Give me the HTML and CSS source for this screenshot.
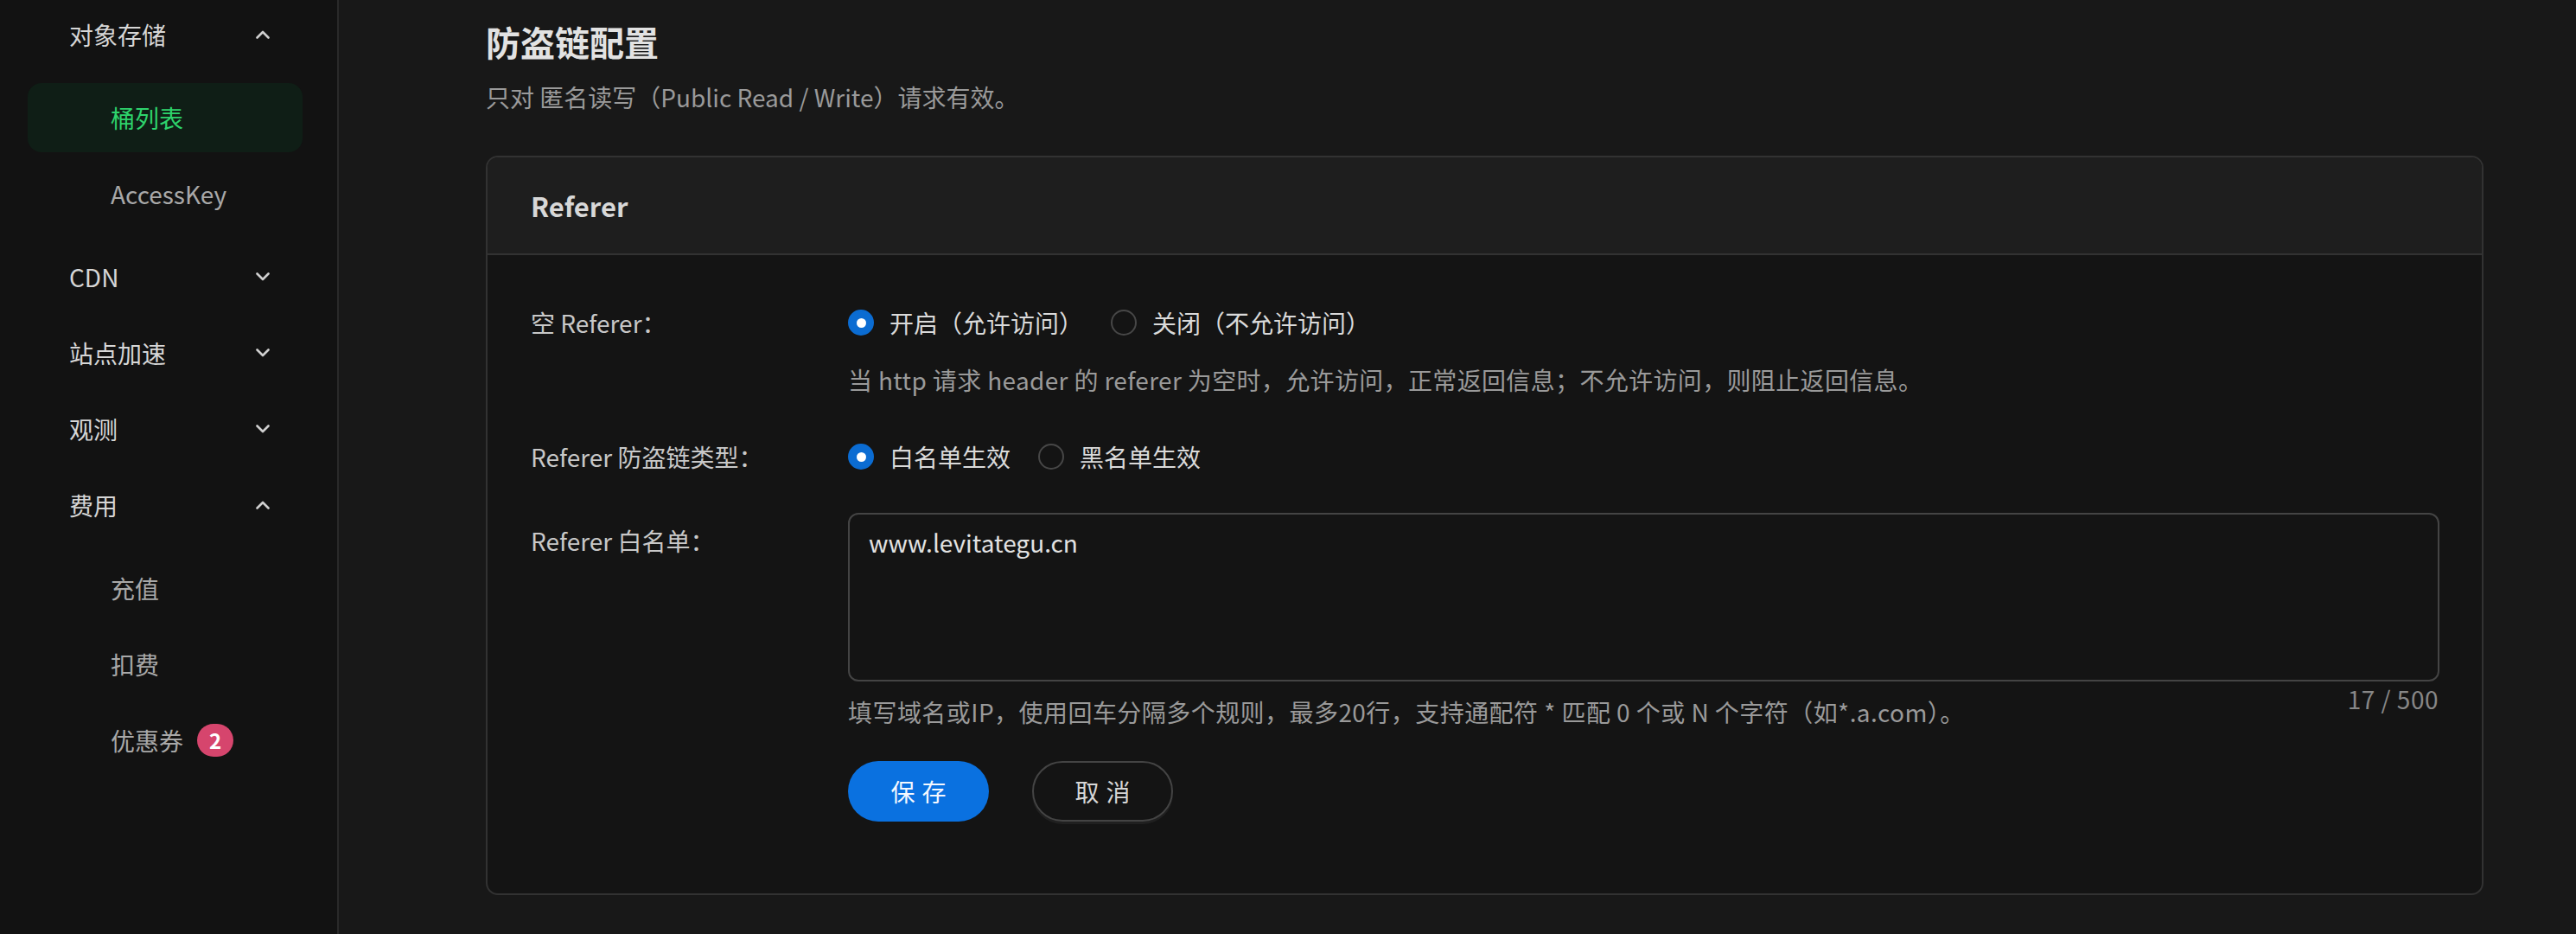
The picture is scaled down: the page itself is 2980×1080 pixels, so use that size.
FILE: index.html
```html
<!DOCTYPE html>
<html lang="zh-CN">
<head>
<meta charset="utf-8">
<title>防盗链配置</title>
<link rel="stylesheet" href="styles.css">
</head>
<body>
<div class="layout">
  <aside class="sidebar">
    <ul class="menu">
      <li class="menu-group">
        <div class="menu-item parent"><span>对象存储</span><svg class="chev" viewBox="0 0 16 10"><polyline points="1.5,8.5 8,2 14.5,8.5"/></svg></div>
        <ul class="submenu">
          <li class="menu-item sub active">桶列表</li>
          <li class="menu-item sub">AccessKey</li>
        </ul>
      </li>
      <li class="menu-group">
        <div class="menu-item parent"><span>CDN</span><svg class="chev" viewBox="0 0 16 10"><polyline points="1.5,1.5 8,8 14.5,1.5"/></svg></div>
      </li>
      <li class="menu-group">
        <div class="menu-item parent"><span>站点加速</span><svg class="chev" viewBox="0 0 16 10"><polyline points="1.5,1.5 8,8 14.5,1.5"/></svg></div>
      </li>
      <li class="menu-group">
        <div class="menu-item parent"><span>观测</span><svg class="chev" viewBox="0 0 16 10"><polyline points="1.5,1.5 8,8 14.5,1.5"/></svg></div>
      </li>
      <li class="menu-group">
        <div class="menu-item parent"><span>费用</span><svg class="chev" viewBox="0 0 16 10"><polyline points="1.5,8.5 8,2 14.5,8.5"/></svg></div>
        <ul class="submenu">
          <li class="menu-item sub">充值</li>
          <li class="menu-item sub">扣费</li>
          <li class="menu-item sub">优惠券<span class="badge">2</span></li>
        </ul>
      </li>
    </ul>
  </aside>
  <main class="main">
    <h1 class="page-title">防盗链配置</h1>
    <p class="page-desc">只对 匿名读写（Public Read / Write）请求有效。</p>
    <section class="card">
      <div class="card-header">Referer</div>
      <div class="card-body">
        <div class="form-row row-1">
          <div class="label">空 Referer：</div>
          <div class="control">
            <div class="radio-group">
              <label class="radio checked"><span class="dot"></span>开启（允许访问）</label>
              <label class="radio"><span class="dot"></span>关闭（不允许访问）</label>
            </div>
            <div class="help">当 http 请求 header 的 referer 为空时，允许访问，正常返回信息；不允许访问，则阻止返回信息。</div>
          </div>
        </div>
        <div class="form-row row-2">
          <div class="label">Referer 防盗链类型：</div>
          <div class="control">
            <div class="radio-group">
              <label class="radio checked"><span class="dot"></span>白名单生效</label>
              <label class="radio"><span class="dot"></span>黑名单生效</label>
            </div>
          </div>
        </div>
        <div class="form-row row-3">
          <div class="label label-top">Referer 白名单：</div>
          <div class="control">
            <div class="textarea-wrap">
              <textarea class="textarea" readonly>www.levitategu.cn</textarea>
              <span class="counter">17 / 500</span>
            </div>
            <div class="help help-tight">填写域名或IP，使用回车分隔多个规则，最多20行，支持通配符 * 匹配 0 个或 N 个字符（如*.a.com）。</div>
          </div>
        </div>
        <div class="form-row actions">
          <div class="label"></div>
          <div class="control buttons">
            <button class="btn btn-primary"><span>保存</span></button>
            <button class="btn btn-default"><span>取消</span></button>
          </div>
        </div>
      </div>
    </section>
  </main>
</div>
</body>
</html>
```
FILE: styles.css
```css
* { box-sizing: border-box; }
html, body {
  margin: 0;
  padding: 0;
  background: #181818;
  font-family: "Noto Sans CJK SC", "Noto Sans", sans-serif;
  font-size: 28px;
  color: #d0d0d0;
}
.layout {
  display: flex;
  height: 1080px;
  overflow: hidden;
}
.sidebar {
  width: 392px;
  flex: none;
  background: #121212;
  border-right: 2px solid #2a2a2a;
  padding: 0 40px 0 32px;
}
.menu, .submenu {
  list-style: none;
  margin: 0;
  padding: 0;
}
.menu {
  display: flex;
  flex-direction: column;
  gap: 8px;
}
.submenu {
  display: flex;
  flex-direction: column;
  gap: 8px;
  margin-top: 8px;
  padding: 8px 0;
}
.menu-item {
  height: 80px;
  display: flex;
  align-items: center;
  border-radius: 16px;
  line-height: 40px;
}
.menu-item.parent {
  justify-content: space-between;
  padding: 0 38px 0 48px;
  color: #d6d6d6;
}
.menu-item.sub {
  padding-left: 96px;
  color: #a8a8a8;
}
.menu-item.active {
  background: #0f1e16;
  color: #2ed36c;
}
.chev {
  width: 16px;
  height: 10px;
  fill: none;
  stroke: #cfcfcf;
  stroke-width: 2.6;
  stroke-linecap: round;
  stroke-linejoin: round;
}
.badge {
  display: inline-flex;
  align-items: center;
  justify-content: center;
  margin-left: 16px;
  width: 42px;
  height: 38px;
  border-radius: 19px;
  background: #d6456d;
  color: #fff;
  font-weight: 700;
  font-size: 24px;
  line-height: 38px;
}
.main {
  flex: 1;
  min-width: 0;
  padding: 20px 107px 0 170px;
}
.page-title {
  margin: 0;
  font-size: 40px;
  line-height: 56px;
  font-weight: 700;
  color: #e2e2e2;
}
.page-desc {
  margin: 16px 0 0;
  font-size: 28px;
  line-height: 40px;
  color: #9a9a9a;
}
.card {
  margin-top: 48px;
  border: 2px solid #323232;
  border-radius: 14px;
  background: #141414;
  overflow: hidden;
}
.card-header {
  height: 113px;
  display: flex;
  align-items: center;
  padding: 0 50px;
  background: #1e1e1e;
  border-bottom: 2px solid #323232;
  font-size: 31px;
  font-weight: 700;
  color: #d8d8d8;
}
.card-body {
  padding: 54px 49px 83px 50px;
}
.form-row {
  display: grid;
  grid-template-columns: 367px 1fr;
}
.row-1 { margin-bottom: 45px; }
.row-2 { margin-bottom: 41px; }
.row-3 { margin-bottom: 37px; }
.label {
  line-height: 48px;
  color: #c8c8c8;
}
.label-top { padding-top: 8px; }
.radio-group {
  display: flex;
  align-items: center;
  height: 48px;
}
.radio {
  display: inline-flex;
  align-items: center;
  margin-right: 32px;
  color: #dadada;
  line-height: 48px;
}
.dot {
  width: 30px;
  height: 30px;
  border-radius: 50%;
  border: 2px solid #474747;
  margin-right: 18px;
  flex: none;
  position: relative;
}
.radio.checked .dot {
  background: #0b6cd2;
  border-color: #0b6cd2;
}
.radio.checked .dot::after {
  content: "";
  position: absolute;
  left: 50%;
  top: 50%;
  width: 11px;
  height: 11px;
  margin: -5.5px 0 0 -5.5px;
  border-radius: 50%;
  background: #fff;
}
.help {
  margin-top: 22px;
  line-height: 40px;
  color: #9a9a9a;
  letter-spacing: 0.35px;
}
.help-tight { margin-top: 15px; letter-spacing: 0.45px; }
.textarea-wrap {
  position: relative;
}
.textarea {
  display: block;
  width: 100%;
  height: 195px;
  resize: none;
  background: #141414;
  border: 2px solid #444;
  border-radius: 12px;
  padding: 12px 22px;
  font-family: inherit;
  font-size: 28px;
  line-height: 40px;
  color: #e2e2e2;
  outline: none;
}
.counter {
  position: absolute;
  right: 1px;
  top: 100%;
  line-height: 40px;
  color: #878787;
  letter-spacing: 0.5px;
}
.buttons {
  display: flex;
  gap: 50px;
}
.btn {
  height: 70px;
  width: 163px;
  border-radius: 35px;
  font-family: inherit;
  font-size: 28px;
  display: inline-flex;
  align-items: center;
  justify-content: center;
  cursor: pointer;
}
.btn span {
  letter-spacing: 8px;
  margin-right: -8px;
}
.btn-primary {
  background: #0a71e0;
  border: none;
  color: #f4f8ff;
}
.btn-default {
  background: transparent;
  border: 2px solid #444;
  color: #d6d6d6;
  box-shadow: 0 3px 0 #202020;
}
```
